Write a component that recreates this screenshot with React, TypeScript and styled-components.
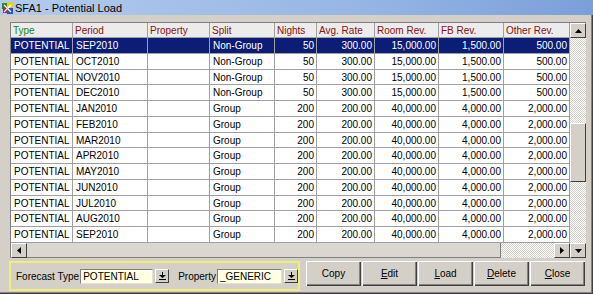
import React from 'react';
import styled, { createGlobalStyle } from 'styled-components';

const GlobalStyle = createGlobalStyle`
  body {
    margin: 0;
    font-family: 'Liberation Sans', Arial, sans-serif;
    font-size: 10px;
  }
`;

const Window = styled.div`
  width: 593px;
  height: 294px;
  box-sizing: border-box;
  background: #d4d0c8;
  display: flex;
  flex-direction: column;
  box-shadow: inset -1px -1px #404040, inset -2px -2px #808080;
  white-space: nowrap;
`;

const TitleBar = styled.div`
  height: 15px;
  display: flex;
  align-items: center;
  gap: 2px;
  padding-left: 2px;
  background: linear-gradient(to right, #b3cbec, #97b6e4 60%, #7b9fd8);
  color: #000;
  font-size: 11px;
`;

const Body = styled.div`
  display: flex;
  flex-direction: column;
  padding: 7px 0 0 10px;
`;

const GridFrame = styled.div`
  display: flex;
  width: 577px;
  height: 236px;
`;

const MainPane = styled.div`
  display: flex;
  flex-direction: column;
  border-top: 1px solid #808080;
  border-left: 1px solid #808080;
  background: #fff;
`;

const Table = styled.div`
  display: grid;
  grid-template-columns: 62px 75px 62px 65px 42px 58px 64px 65px 66px;
  grid-template-rows: 15px repeat(13, 15.75px);
`;

const HeadCell = styled.div<{ $first?: boolean }>`
  box-sizing: border-box;
  background: #ececec;
  border-right: 1px solid #a0a0a0;
  border-bottom: 1px solid #a0a0a0;
  color: ${(p) => (p.$first ? '#128a12' : '#8a1010')};
  padding: 1px 0 0 2px;
  line-height: 13px;
  overflow: hidden;
`;

const Cell = styled.div<{ $num?: boolean; $sel?: boolean }>`
  box-sizing: border-box;
  border-right: 1px solid #a0a0a0;
  border-bottom: 1px solid #a0a0a0;
  background: ${(p) => (p.$sel ? '#0c1d78' : '#fff')};
  color: ${(p) => (p.$sel ? '#fff' : '#000')};
  text-align: ${(p) => (p.$num ? 'right' : 'left')};
  padding: ${(p) => (p.$num ? '1px 2px 0 0' : '1px 0 0 3px')};
  overflow: hidden;
  line-height: 13px;
`;

const HScroll = styled.div`
  display: flex;
  height: 15px;
  background: #d4d0c8;
`;

const Dither = styled.div`
  flex: 1;
  background: repeating-conic-gradient(#ffffff 0 25%, #d4d0c8 0 50%) 0 0 / 2px 2px;
`;

const HThumb = styled.div`
  width: 474px;
  box-sizing: border-box;
  background: #dad7d0;
  border-bottom: 1px solid #808080;
  border-right: 1px solid #808080;
`;

const VScroll = styled.div`
  width: 16px;
  display: flex;
  flex-direction: column;
  border-top: 1px solid #808080;
`;

const VTrack = styled.div`
  flex: 1;
  padding-top: 85px;
  background: repeating-conic-gradient(#ffffff 0 25%, #d4d0c8 0 50%) 0 0 / 2px 2px;
`;

const VThumb = styled.div`
  height: 59px;
  box-sizing: border-box;
  background: #d4d0c8;
  border-top: 1px solid #fff;
  border-left: 1px solid #fff;
  border-right: 1px solid #404040;
  border-bottom: 1px solid #404040;
`;

const ArrowBtn = styled.div`
  width: 16px;
  height: 15px;
  flex: none;
  box-sizing: border-box;
  background: #d4d0c8;
  border-top: 1px solid #fff;
  border-left: 1px solid #fff;
  border-right: 1px solid #404040;
  border-bottom: 1px solid #404040;
  display: flex;
  align-items: center;
  justify-content: center;
`;

const BottomBar = styled.div`
  display: flex;
  align-items: flex-start;
  gap: 6px;
  margin: 3px 0 0 -1px;
`;

const FilterBox = styled.div`
  width: 291px;
  height: 30px;
  box-sizing: border-box;
  border: 2px solid #eeee78;
  display: flex;
  align-items: center;
  padding-left: 5px;
`;

const Label = styled.span<{ $gap: number }>`
  color: #000;
  margin-left: ${(p) => p.$gap}px;
  margin-right: 1px;
`;

const Input = styled.div<{ $w: number }>`
  width: ${(p) => p.$w}px;
  height: 15px;
  box-sizing: border-box;
  background: #ffffe1;
  border-top: 1px solid #808080;
  border-left: 1px solid #808080;
  border-right: 1px solid #e0e0e0;
  border-bottom: 1px solid #e0e0e0;
  padding: 0 0 0 2px;
  line-height: 13px;
  color: #000;
`;

const LovBtn = styled.div`
  width: 14px;
  height: 14px;
  margin-left: 2px;
  box-sizing: border-box;
  background: #d4d0c8;
  border-top: 1px solid #fff;
  border-left: 1px solid #fff;
  border-right: 1px solid #404040;
  border-bottom: 1px solid #404040;
  display: flex;
  align-items: center;
  justify-content: center;
`;

const Buttons = styled.div`
  display: flex;
  gap: 1px;
`;

const Button = styled.button`
  width: 55px;
  height: 25px;
  box-sizing: border-box;
  background: #d4d0c8;
  border: none;
  box-shadow: inset 1px 1px #fff, inset -1px -1px #404040, inset -2px -2px #808080;
  font-family: 'Liberation Sans', Arial, sans-serif;
  font-size: 10px;
  color: #000;
  padding: 0;
  & u {
    text-decoration: underline;
  }
`;

const AppIcon = () => (
  <svg width="11" height="12" viewBox="0 0 11 12">
    <rect x="0" y="1" width="6" height="6" fill="#2a8c3a" />
    <rect x="5" y="0" width="6" height="6" fill="#e8d020" />
    <rect x="1" y="5" width="6" height="6" fill="#c02030" />
    <rect x="5" y="6" width="6" height="6" fill="#3050c0" />
    <path d="M2 3 L9 10 M9 3 L2 10" stroke="#fff" strokeWidth="1.2" />
  </svg>
);

const Tri = ({ dir }: { dir: 'up' | 'down' | 'left' | 'right' }) => {
  const pts = {
    up: '0,4 7,4 3.5,0',
    down: '0,0 7,0 3.5,4',
    left: '4,0 4,7 0,3.5',
    right: '0,0 0,7 4,3.5',
  }[dir];
  const vertical = dir === 'up' || dir === 'down';
  return (
    <svg width={vertical ? 7 : 4} height={vertical ? 4 : 7}>
      <polygon points={pts} fill="#000" />
    </svg>
  );
};

const LovIcon = () => (
  <svg width="7" height="8" viewBox="0 0 7 8">
    <rect x="3" y="0" width="1" height="3" fill="#000" />
    <polygon points="0,3 7,3 3.5,6" fill="#000" />
    <rect x="0" y="7" width="7" height="1" fill="#000" />
  </svg>
);

const headers = ['Type', 'Period', 'Property', 'Split', 'Nights', 'Avg. Rate', 'Room Rev.', 'FB Rev.', 'Other Rev.'];

const nonGroup = ['SEP2010', 'OCT2010', 'NOV2010', 'DEC2010'];
const group = ['JAN2010', 'FEB2010', 'MAR2010', 'APR2010', 'MAY2010', 'JUN2010', 'JUL2010', 'AUG2010', 'SEP2010'];

const rows: string[][] = [
  ...nonGroup.map((p) => ['POTENTIAL', p, '', 'Non-Group', '50', '300.00', '15,000.00', '1,500.00', '500.00']),
  ...group.map((p) => ['POTENTIAL', p, '', 'Group', '200', '200.00', '40,000.00', '4,000.00', '2,000.00']),
];

const App: React.FC = () => (
  <>
    <GlobalStyle />
    <Window>
      <TitleBar>
        <AppIcon />
        <span>SFA1 - Potential Load</span>
      </TitleBar>
      <Body>
        <GridFrame>
          <MainPane>
            <Table>
              {headers.map((h, i) => (
                <HeadCell key={h} $first={i === 0}>
                  {h}
                </HeadCell>
              ))}
              {rows.map((r, ri) =>
                r.map((v, ci) => (
                  <Cell key={`${ri}-${ci}`} $num={ci >= 4} $sel={ri === 0}>
                    {v}
                  </Cell>
                ))
              )}
            </Table>
            <HScroll>
              <ArrowBtn>
                <Tri dir="left" />
              </ArrowBtn>
              <HThumb />
              <Dither />
              <ArrowBtn>
                <Tri dir="right" />
              </ArrowBtn>
            </HScroll>
          </MainPane>
          <VScroll>
            <ArrowBtn>
              <Tri dir="up" />
            </ArrowBtn>
            <VTrack>
              <VThumb />
            </VTrack>
            <ArrowBtn>
              <Tri dir="down" />
            </ArrowBtn>
          </VScroll>
        </GridFrame>
        <BottomBar>
          <FilterBox>
            <Label $gap={0}>Forecast Type</Label>
            <Input $w={74}>POTENTIAL</Input>
            <LovBtn>
              <LovIcon />
            </LovBtn>
            <Label $gap={9}>Property</Label>
            <Input $w={66}>_GENERIC</Input>
            <LovBtn>
              <LovIcon />
            </LovBtn>
          </FilterBox>
          <Buttons>
            <Button>Copy</Button>
            <Button>
              <u>E</u>dit
            </Button>
            <Button>
              <u>L</u>oad
            </Button>
            <Button>
              <u>D</u>elete
            </Button>
            <Button>
              <u>C</u>lose
            </Button>
          </Buttons>
        </BottomBar>
      </Body>
    </Window>
  </>
);

export default App;
